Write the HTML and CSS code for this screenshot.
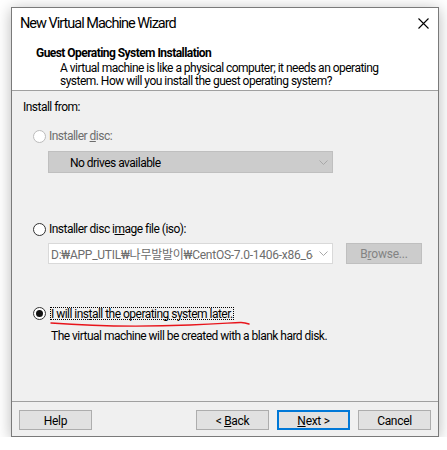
FILE: index.html
```html
<!DOCTYPE html>
<html lang="en">
<head>
<meta charset="utf-8">
<title>New Virtual Machine Wizard</title>
<link rel="stylesheet" href="styles.css">
</head>
<body>
<div class="window">
  <div class="top">
    <div class="titlebar">
      <span class="title">New Virtual Machine Wizard</span>
      <svg class="close" width="11" height="11" viewBox="0 0 11 11"><path d="M0.5 0.5L10.5 10.5M10.5 0.5L0.5 10.5" stroke="#000" stroke-width="1.1" fill="none"/></svg>
    </div>
    <div class="heading">Guest Operating System Installation</div>
    <div class="desc">A virtual machine is like a physical computer; it needs an operating<br>system. How will you install the guest operating system?</div>
  </div>
  <div class="content">
    <div class="label">Install from:</div>
    <div class="radio-row row1 disabled">
      <span class="radio"></span>
      <span>Installer <u>d</u>isc:</span>
    </div>
    <div class="combo combo-disabled">
      <span class="combo-text">No drives available</span>
      <svg class="chev" width="9" height="5" viewBox="0 0 9 5"><path d="M0.5 0.5L4.5 4.5L8.5 0.5" stroke="#a8a8a8" fill="none"/></svg>
    </div>
    <div class="radio-row row2">
      <span class="radio"></span>
      <span>Installer disc i<u>m</u>age file (iso):</span>
    </div>
    <div class="iso-line">
      <div class="combo combo-white">
        <span class="combo-text path">D:₩APP_UTIL₩나무발발이₩CentOS-7.0-1406-x86_64-DVD.iso</span>
        <svg class="chev" width="9" height="5" viewBox="0 0 9 5"><path d="M0.5 0.5L4.5 4.5L8.5 0.5" stroke="#a8a8a8" fill="none"/></svg>
      </div>
      <div class="browse">B<u>r</u>owse...</div>
    </div>
    <div class="radio-row row3">
      <span class="radio checked"></span>
      <span class="focus">I will ins<u>t</u>all the operating system later.</span>
    </div>
    <div class="note">The virtual machine will be created with a blank hard disk.</div>
    <svg class="scribble" width="210" height="10" viewBox="0 0 210 10"><path d="M1 3 C 40 6, 90 7, 140 5 S 190 1, 199 4" stroke="#e8141b" stroke-width="1.4" fill="none" stroke-linecap="round"/></svg>
  </div>
  <div class="footer">
    <div class="btn">Help</div>
    <div class="spacer"></div>
    <div class="btn">&lt; <u>B</u>ack</div>
    <div class="btn primary"><u>N</u>ext &gt;</div>
    <div class="btn">Cancel</div>
  </div>
</div>
</body>
</html>
```
FILE: styles.css
```css
html, body {
  margin: 0;
  padding: 0;
  background: #ffffff;
}
body {
  padding: 7px 0 0 11px;
  font-family: Roboto, "Noto Sans CJK KR", sans-serif;
  font-size: 12px;
  color: #000;
}
.window {
  width: 426px;
  height: 428px;
  border: 1px solid #7a7a7a;
  background: #f0f0f0;
  box-shadow: 0 2px 14px rgba(0, 0, 0, 0.28);
  display: flex;
  flex-direction: column;
  position: relative;
  letter-spacing: -0.52px;
}
.top {
  background: #fff;
  height: 82px;
  border-bottom: 1px solid #a0a0a0;
}
.titlebar {
  height: 30px;
  display: flex;
  align-items: center;
  justify-content: space-between;
  padding: 0 9px 0 8px;
}
.title {
  font-size: 14.5px;
  letter-spacing: -1px;
  line-height: 30px;
  padding-top: 2px;
}
.close {
  display: block;
}
.heading {
  margin-top: 7px;
  padding-left: 24px;
  font-weight: bold;
  line-height: 16px;
  letter-spacing: -0.55px;
}
.desc {
  padding-left: 48px;
  line-height: 13px;
  padding-top: 1px;
}
.content {
  height: 310px;
  position: relative;
  display: flex;
  flex-direction: column;
  align-items: flex-start;
}
.label {
  margin: 8px 0 0 11px;
  line-height: 16px;
}
.radio-row {
  display: flex;
  align-items: center;
  gap: 3px;
  margin-left: 21px;
  height: 16px;
  line-height: 16px;
}
.row1 { margin-top: 13px; }
.row2 { margin-top: 48px; }
.row3 { margin-top: 41px; }
.disabled { color: #6d6d6d; }
.radio {
  width: 11px;
  height: 11px;
  border: 1px solid #333;
  border-radius: 50%;
  background: #fff;
  position: relative;
  flex: none;
}
.disabled .radio {
  border-color: #bcbcbc;
}
.radio.checked::after {
  content: "";
  position: absolute;
  left: 2px;
  top: 2px;
  width: 7px;
  height: 7px;
  border-radius: 50%;
  background: #111;
}
.combo {
  width: 283px;
  height: 20px;
  display: flex;
  align-items: center;
  justify-content: space-between;
  box-sizing: content-box;
  overflow: hidden;
}
.combo-disabled {
  margin: 7px 0 0 36px;
  background: #cccccc;
  border: 1px solid #bfbfbf;
}
.combo-disabled .combo-text {
  padding-left: 21px;
  padding-top: 1px;
}
.combo-white {
  background: #fff;
  border: 1px solid #d9d9d9;
  height: 19px;
}
.combo-text {
  white-space: nowrap;
  overflow: hidden;
  flex: 1;
}
.path {
  color: #6d6d6d;
  padding-left: 2px;
  max-width: 262px;
  letter-spacing: -0.25px;
}
.chev {
  margin-right: 4px;
  margin-left: 4px;
  flex: none;
}
.iso-line {
  margin: 6px 0 0 36px;
  display: flex;
  gap: 13px;
}
.browse {
  width: 74px;
  height: 19px;
  background: #cccccc;
  border: 1px solid #bfbfbf;
  color: #838383;
  text-align: center;
  line-height: 20px;
  letter-spacing: -0.2px;
}
.focus {
  outline: 1px dotted #000;
  outline-offset: -1px;
  padding: 0 1px;
  height: 13px;
  line-height: 14px;
  margin-left: 1px;
}
.note {
  margin: 7px 0 0 39px;
  line-height: 16px;
}
.scribble {
  position: absolute;
  left: 38px;
  top: 229px;
}
.footer {
  flex: 1;
  border-top: 1px solid #a0a0a0;
  display: flex;
  align-items: flex-start;
  padding: 8px 7px 0 7px;
  gap: 8px;
}
.spacer {
  flex: 1;
}
.btn {
  width: 71px;
  height: 18px;
  background: #e1e1e1;
  border: 1px solid #adadad;
  text-align: center;
  line-height: 20px;
  letter-spacing: -0.3px;
}
.btn.primary {
  width: 69px;
  height: 16px;
  line-height: 18px;
  border: 2px solid #0078d7;
}
```
